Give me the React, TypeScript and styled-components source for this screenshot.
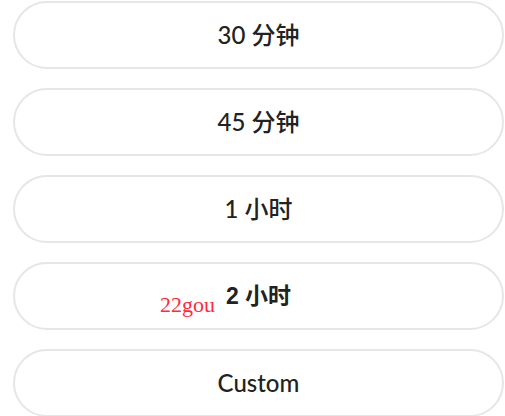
import React from "react";
import styled, { createGlobalStyle } from "styled-components";

const Global = createGlobalStyle`
  html, body { margin: 0; padding: 0; background: #ffffff; }
  body { font-family: "Lato", "Noto Sans CJK SC", sans-serif; }
`;

const List = styled.div`
  display: flex;
  flex-direction: column;
  gap: 19px;
  padding: 1px 1px 0 13px;
  width: 505px;
  box-sizing: border-box;
`;

const Option = styled.button<{ $strong?: boolean }>`
  position: relative;
  height: 68px;
  width: 100%;
  box-sizing: border-box;
  border: 2px solid #e6e6e6;
  border-radius: 34px;
  background: #ffffff;
  display: flex;
  align-items: center;
  justify-content: center;
  font-family: ${(p) =>
    p.$strong
      ? '"Liberation Sans", "Noto Sans CJK SC", sans-serif'
      : '"Lato", "Noto Sans CJK SC", sans-serif'};
  font-size: ${(p) => (p.$strong ? 23 : 24)}px;
  font-weight: ${(p) => (p.$strong ? 700 : 500)};
  color: #222222;
  padding: 0;
  cursor: pointer;
`;

const Tag = styled.span`
  position: absolute;
  left: 145px;
  top: 30px;
  font-family: "Liberation Serif", serif;
  font-size: 22px;
  font-weight: 400;
  color: #ff2a3a;
  line-height: 1;
`;

const Label = styled.span`
  line-height: 1;
`;

export default function App() {
  return (
    <>
      <Global />
      <List>
        <Option><Label>30 分钟</Label></Option>
        <Option><Label>45 分钟</Label></Option>
        <Option><Label>1 小时</Label></Option>
        <Option $strong>
          <Tag>22gou</Tag>
          <Label>2 小时</Label>
        </Option>
        <Option><Label>Custom</Label></Option>
      </List>
    </>
  );
}
